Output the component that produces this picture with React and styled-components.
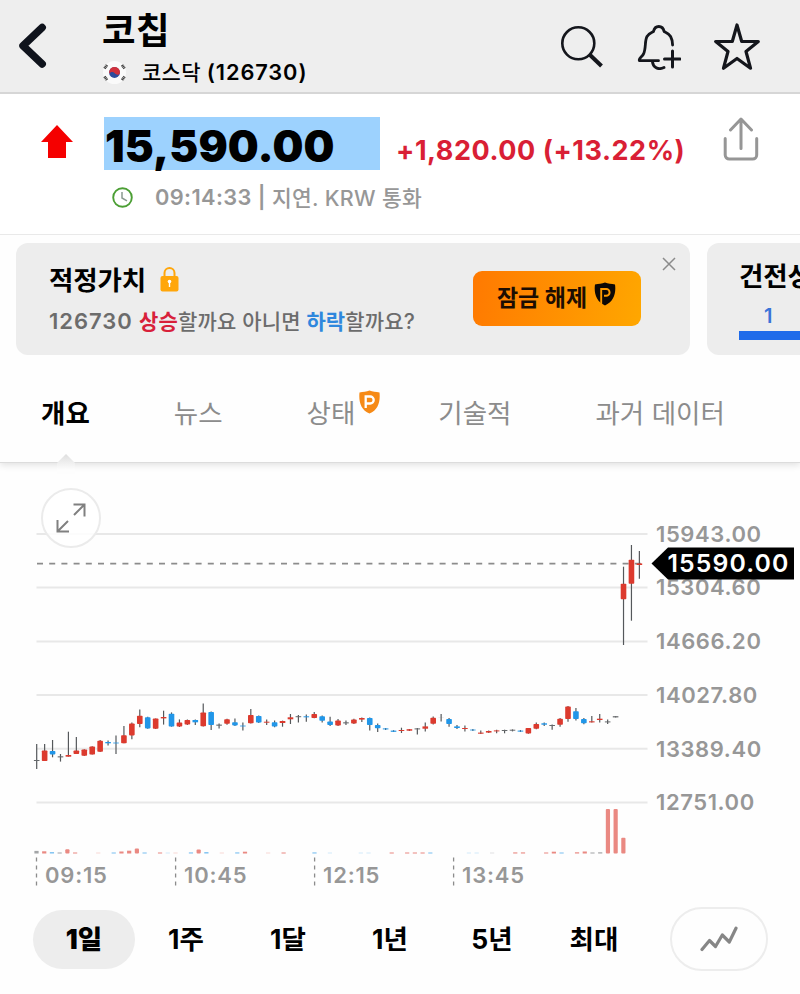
import React, { useState } from 'react';
import styled, { createGlobalStyle } from 'styled-components';

const GlobalStyle = createGlobalStyle`
  * {
    box-sizing: border-box;
  }

  body {
    margin: 0;
    background: #fefefe;
    font-family: Inter, 'Noto Sans CJK KR', sans-serif;
    color: #000;
  }

  button {
    font-family: inherit;
    border: none;
    background: none;
    padding: 0;
    margin: 0;
    color: inherit;
    cursor: pointer;
  }

  svg {
    display: block;
    flex-shrink: 0;
  }
`;

const Screen = styled.div`
  width: 800px;
  height: 994px;
  overflow: hidden;
  display: flex;
  flex-direction: column;
`;

const Header = styled.header`
  height: 94px;
  flex-shrink: 0;
  display: flex;
  background: #eee;
  border-bottom: 2px solid #d6d6d6;
`;

const BackButton = styled.button`
  width: 102px;
  height: 92px;
  padding-left: 18px;
  display: flex;
  align-items: center;
`;

const Titles = styled.div`
  flex: 1;
  padding-top: 8px;
`;

const Title = styled.h1`
  margin: 0;
  font-size: 36.5px;
  line-height: 46px;
  font-weight: 700;
  letter-spacing: 0.5px;
`;

const Exchange = styled.div`
  display: flex;
  align-items: center;
  height: 36px;
  padding-left: 1px;
  font-size: 21px;
  font-weight: 500;
  white-space: pre;
`;

const ExchangeName = styled.span`
  margin: -2px 0 0 16px;
  letter-spacing: 0.3px;
`;

const ExchangeCode = styled.span`
  font-size: 21.8px;
  letter-spacing: 0.9px;
  font-weight: 600;
`;

const HeaderActions = styled.div`
  display: flex;
  align-items: center;
  gap: 33px;
  padding: 1px 40px 0 0;
`;

const Quote = styled.section`
  height: 141px;
  flex-shrink: 0;
  display: flex;
  background: #fff;
  border-bottom: 1px solid #e9e9e9;
`;

const Direction = styled.div`
  width: 104px;
  padding: 31px 0 0 41px;
`;

const QuoteBody = styled.div`
  flex: 1;
  padding-top: 23px;
`;

const PriceRow = styled.div`
  display: flex;
  height: 53px;
`;

const Price = styled.div`
  width: 276px;
  padding-left: 1px;
  background: #9dd2fe;
  font-size: 43.5px;
  line-height: 58px;
  font-weight: 900;
  letter-spacing: 0.1px;
`;

const Change = styled.div`
  margin-left: 16px;
  font-size: 27px;
  line-height: 67px;
  font-weight: 700;
  letter-spacing: 0.55px;
  color: #d91f35;
  white-space: nowrap;
`;

const TimeRow = styled.div`
  display: flex;
  align-items: center;
  height: 54px;
  padding-left: 8px;
  font-size: 21.5px;
  font-weight: 500;
  color: #979797;
  white-space: pre;
`;

const TimeText = styled.span`
  margin-left: 22px;
  font-size: 21.8px;
  font-weight: 600;
  letter-spacing: 0.4px;
`;

const TimeNote = styled.span`
  margin-top: -2px;
  letter-spacing: 0.3px;
`;

const ShareButton = styled.button`
  width: 77px;
  height: 91px;
  display: flex;
  align-items: center;
`;

const Cards = styled.section`
  display: flex;
  flex-shrink: 0;
  gap: 17px;
  padding: 8px 0 0 16px;
  overflow: hidden;
`;

const Card = styled.div`
  width: ${props => props.$width};
  height: 112px;
  flex-shrink: 0;
  display: flex;
  background: #ededed;
  border-radius: 12px;
`;

const FairValue = styled.div`
  width: 457px;
  padding: 16px 0 0 33px;
`;

const CardTitle = styled.div`
  display: flex;
  align-items: center;
  gap: 14px;
  height: 40px;
  font-size: 26.5px;
  font-weight: 700;
  letter-spacing: -0.1px;
  white-space: nowrap;
`;

const CardTitleText = styled.span`
  margin-top: -2px;
`;

const Question = styled.div`
  height: 42px;
  line-height: 44px;
  font-size: 21px;
  font-weight: 500;
  letter-spacing: 0.15px;
  color: #6c6c6c;
  white-space: pre;
`;

const Ticker = styled.span`
  font-size: 22px;
  font-weight: 600;
  letter-spacing: 0.95px;
`;

const Accent = styled.span`
  color: ${props => props.$color};
  font-weight: 700;
`;

const UnlockButton = styled.button`
  width: 168px;
  height: 55px;
  margin-top: 28px;
  display: flex;
  justify-content: center;
  border-radius: 9px;
  background: linear-gradient(100deg, #ff7901, #ffa700);
  color: #1c0d02;
  font-size: 23px;
  line-height: 54px;
  font-weight: 700;
  white-space: nowrap;
  gap: 7px;

  svg {
    margin: 11px 1px 0 0;
  }
`;

const CloseButton = styled.button`
  width: 14px;
  height: 14px;
  margin: 14px 0 0 21px;
`;

const Health = styled.div`
  padding: 12px 0 0 32px;
`;

const HealthScore = styled.div`
  width: 120px;
  padding-left: 25px;
  height: 45px;
  line-height: 42px;
  border-bottom: 9px solid #1f6bea;
  font-size: 20px;
  font-weight: 600;
  color: #3a74d8;
`;

const Tabs = styled.nav`
  height: 108px;
  flex-shrink: 0;
  position: relative;
  display: flex;
  padding: 27px 0 0 41px;
  border-bottom: 1px solid #dcdcdc;
  box-shadow: 0 2px 7px rgba(0, 0, 0, 0.12);
  clip-path: inset(0 0 -14px 0);
`;

const Tab = styled.button`
  height: 58px;
  margin-right: ${props => props.$gap};
  display: flex;
  align-items: center;
  font-size: 26.5px;
  font-weight: ${props => (props.$active ? 700 : 400)};
  color: ${props => (props.$active ? '#000' : '#8c8c8c')};
  letter-spacing: 0;
  white-space: nowrap;

  svg {
    margin: -19px 0 0 4px;
  }
`;

const Notch = styled.svg`
  position: absolute;
  left: 55px;
  bottom: -12px;
`;

const ChartArea = styled.section`
  position: relative;
  height: 426px;
  flex-shrink: 0;
`;

const ExpandButton = styled.button`
  position: absolute;
  left: 41px;
  top: 25px;
  width: 60px;
  height: 60px;
  display: flex;
  align-items: center;
  justify-content: center;
  border: 2px solid #ebebeb;
  border-radius: 50%;
  background: rgba(255, 255, 255, 0.85);
`;

const AxisLabel = styled.text`
  font-size: ${props => props.$size || '22px'};
  font-weight: ${props => props.$weight || 600};
  fill: ${props => props.$fill || '#979797'};
  letter-spacing: ${props => props.$spacing || '0.6px'};
`;

const Periods = styled.div`
  display: flex;
  align-items: center;
  padding: 18px 0 0 33px;
`;

const Period = styled.button`
  width: 102px;
  height: 59px;
  border-radius: 30px;
  background: ${props => (props.$active ? '#ededed' : 'transparent')};
  font-size: 26.5px;
  line-height: 57px;
  font-weight: ${props => (props.$active ? 900 : 700)};
  letter-spacing: 0;
`;

const StyleButton = styled.button`
  width: 98px;
  height: 64px;
  margin-left: 25px;
  display: flex;
  align-items: center;
  justify-content: center;
  border: 2px solid #ededed;
  border-radius: 32px;
`;

const GRID = [
  { y: 534, label: '15943.00' },
  { y: 587.5, label: '15304.60' },
  { y: 641.5, label: '14666.20' },
  { y: 695, label: '14027.80' },
  { y: 748.8, label: '13389.40' },
  { y: 802.6, label: '12751.00' },
];

const TIMES = [
  { x: 36.5, label: '09:15' },
  { x: 175.6, label: '10:45' },
  { x: 314.6, label: '12:15' },
  { x: 453.6, label: '13:45' },
];

const COLORS = { r: '#dc3a2e', b: '#2196e8', n: '#66696c' };

// colour, high, low, body top, body bottom
const CANDLES = [
  ['n', 744, 769, 760, 761], ['r', 744, 761, 750.4, 761], ['b', 740, 757.3, 751, 754.4],
  ['n', 754, 761.6, 756.3, 757.4], ['r', 731.7, 756.6, 755, 756.7], ['r', 737, 754, 750.4, 754],
  ['r', 749.3, 756, 749.5, 755.8], ['r', 746.3, 754.6, 746.5, 754.5], ['r', 740, 752, 740.8, 751.8],
  ['b', 740.4, 745.6, 742, 743.3], ['b', 735.4, 754, 742.6, 743.4], ['r', 726, 743.3, 735.3, 743.2],
  ['r', 722.6, 739.3, 723.4, 735.4], ['r', 709.4, 727.3, 715.7, 724], ['b', 716.8, 728.7, 717.3, 728.4],
  ['r', 718.4, 729, 718.5, 728.8], ['r', 710.7, 724.6, 717, 718.4], ['b', 712.4, 726.7, 713.7, 726.6],
  ['r', 719.4, 727, 722.6, 726.6], ['r', 719.4, 725, 720, 724.6], ['b', 719.4, 725, 720, 722.3],
  ['r', 703.4, 726.4, 712.4, 726.3], ['b', 711.4, 730, 712, 725], ['n', 723.6, 728.4, 724.6, 725.7],
  ['r', 718.7, 724.7, 719.2, 723.8], ['b', 718.6, 726, 722.3, 725.4], ['b', 722.4, 730.4, 725.6, 726.4],
  ['r', 709, 723.4, 715, 723.2], ['b', 715.4, 723, 716, 722.6], ['r', 719.4, 725, 721.7, 722.7],
  ['b', 720.6, 727.3, 722.3, 726.6], ['r', 720.6, 726.7, 721, 723], ['r', 714, 724, 717.3, 719.3],
  ['n', 715, 722.4, 716.2, 717.2], ['b', 714.4, 721.7, 716.3, 717.3], ['r', 712, 718.3, 714, 718],
  ['b', 715.4, 722.6, 716.3, 720.7], ['b', 716.7, 726, 721.4, 725], ['r', 719, 726, 720.4, 725.6],
  ['n', 720.4, 725, 722.3, 723.4], ['r', 718.7, 724, 719.4, 723.6], ['r', 717.4, 722, 718, 719.6],
  ['b', 717.4, 730.4, 718, 725], ['b', 723.6, 732, 725, 728.3], ['b', 728, 730, 728.4, 729.4],
  ['b', 730.2, 732, 730.6, 731.8], ['r', 727.7, 733, 730, 731], ['r', 729, 731, 729.2, 730.7],
  ['n', 728, 734.6, 728.4, 729.4], ['r', 722.6, 731.4, 726.4, 728.7], ['r', 716.6, 724.6, 717.7, 723.7],
  ['n', 714, 721.6, 717, 717.1], ['b', 718, 726.7, 719, 724], ['b', 725, 729, 726.4, 728],
  ['r', 725.6, 731.4, 728, 729], ['b', 729, 731, 729.6, 730.4], ['r', 730.6, 734, 732.6, 733.7],
  ['r', 730.6, 733, 731, 732.6], ['r', 729.7, 733.3, 730.4, 731.4], ['n', 729.7, 733.3, 730, 731],
  ['n', 729.4, 731.4, 729.7, 730.7], ['b', 730, 732, 730.6, 731.6], ['r', 728, 733.8, 728, 733.6],
  ['r', 722.6, 729.3, 724, 728.7], ['b', 722.4, 726, 723.3, 724.7], ['n', 724.6, 729.7, 725, 726],
  ['r', 718, 726.7, 718.7, 724.7], ['r', 706, 721.7, 706.6, 719], ['b', 708, 720.6, 711.3, 719],
  ['b', 718, 724.3, 719, 723.3], ['r', 716, 722.6, 721.3, 722.4], ['r', 714, 722.4, 718.7, 720],
  ['n', 719.4, 724, 721.4, 722.4], ['n', 716.2, 717.4, 716.2, 717.4], ['r', 566.7, 645, 583.7, 599.3],
  ['r', 545, 620.7, 559.7, 583.7], ['r', 551, 578.7, 563.4, 565],
];

// slot, colour, height
const VOLUMES = [
  [0, 'n', 2.6], [1, 'r', 2.2], [2, 'b', 1.4], [3, 'n', 1], [4, 'r', 4.2], [5, 'r', 1], [8, 'r', 0.8],
  [10, 'b', 1], [11, 'r', 2], [12, 'r', 2.8], [13, 'r', 5], [14, 'b', 1], [16, 'r', 1], [17, 'b', 0.6],
  [18, 'r', 0.5], [20, 'b', 1.1], [21, 'r', 4], [22, 'b', 1.4], [24, 'r', 0.4], [26, 'b', 1.1],
  [27, 'r', 1.8], [30, 'r', 0.5], [32, 'r', 1], [36, 'b', 1.1], [38, 'b', 0.4], [42, 'b', 0.6],
  [43, 'b', 0.6], [46, 'r', 1], [48, 'r', 1], [49, 'r', 1], [50, 'r', 1], [51, 'b', 0.9],
  [56, 'b', 0.5], [57, 'b', 0.4], [59, 'n', 0.5], [62, 'r', 1.1], [63, 'r', 1.1], [66, 'r', 1],
  [67, 'r', 1.8], [68, 'b', 1], [70, 'r', 1.2], [71, 'r', 2], [72, 'n', 1], [73, 'n', 1.2],
  [74, 'r', 44.5], [75, 'r', 44.5], [76, 'r', 15.8],
];

const BackIcon = () => (
  <svg width="30" height="48" viewBox="0 0 30 48" fill="none" stroke="#0f131c" strokeWidth="7.5" strokeLinecap="round" strokeLinejoin="round">
    <path d="M24.2 5.5 5 23.8 24.2 42" />
  </svg>
);

const FlagIcon = () => (
  <svg width="23" height="23" viewBox="0 0 23 23">
    <circle cx="11.5" cy="11.5" r="11.5" fill="#fafafa" />
    <circle cx="11.5" cy="11.5" r="5.4" fill="#2c4b9c" />
    <path d="M6.7 9a5.4 5.4 0 0 1 10.1 3.7c-1 1.5-3.2 1.3-5-.5-1.9-1.8-4.4-1.3-5.5.6A5.4 5.4 0 0 1 6.7 9z" fill="#d0303c" />
    <g stroke="#444" strokeWidth="2.8" strokeDasharray="1.2 0.4">
      <path d="M1.5 7.5 4 4M19 4l2.5 3.5M1.5 15.5 4 19M19 19l2.5-3.5" />
    </g>
  </svg>
);

const SearchIcon = () => (
  <svg width="44" height="44" viewBox="0 0 44 44" fill="none" stroke="#14161c">
    <circle cx="18.3" cy="18.3" r="16" strokeWidth="2.6" />
    <path d="M29.5 29.5 41.5 41" strokeWidth="4" />
  </svg>
);

const BellIcon = () => (
  <svg width="44" height="46" viewBox="0 0 44 46" fill="none" stroke="#14161c" strokeWidth="2.8" strokeLinecap="round" strokeLinejoin="round">
    <path d="M21.5 36.7H2.5C1 34.5 5 33 6.5 30c2.8-6 1-13 3.5-17.5C12 9 15 8.5 16.5 7.5 17.3 3.5 19 2.5 21.8 2.5s4.5 1 5.300 5c1.500 1 4.500 1.500 6.500 5 1.500 2.800 2 5.500 2 8.500" />
    <path d="M15.5 38c.5 5 5.5 8.5 11.5 5.5" />
    <path d="M35.5 27v16M27.5 35H43" strokeWidth="3" />
  </svg>
);

const StarIcon = () => (
  <svg width="46" height="47" viewBox="0 0 46 47" fill="none" stroke="#14161c" strokeWidth="3.2" strokeLinejoin="round">
    <path d="m23 2 4.7 16.500H44.300L32 28.500 36.500 45.200 23 35.500 9.500 45.200 14 28.500 1.700 18.500H18.300z" />
  </svg>
);

const ShareIcon = () => (
  <svg width="36" height="45" viewBox="0 0 36 45" fill="none" stroke="#969696" strokeWidth="3" strokeLinecap="round" strokeLinejoin="round">
    <path d="M2.2 21.5V38a4 4 0 0 0 4 4h23.5a4 4 0 0 0 4-4V21.5M18 31.5V2.5M7.5 13 18 2l10.5 11" />
  </svg>
);

const ClockIcon = () => (
  <svg width="21" height="21" viewBox="0 0 21 21" fill="none">
    <circle cx="10.5" cy="10.5" r="9.3" stroke="#4c9f35" strokeWidth="1.9" />
    <path d="M10 5v6l5 2.8" stroke="#8b9a91" strokeWidth="1.5" />
  </svg>
);

const LockIcon = () => (
  <svg width="19" height="25" viewBox="0 0 19 25">
    <path d="M4.5 10V6a5 5 0 0 1 10 0v4" fill="none" stroke="#ffa60a" strokeWidth="2" />
    <rect x="0.5" y="9" width="18" height="15.5" rx="2" fill="#ffa60a" />
    <circle cx="9.5" cy="14.5" r="1.8" fill="#fff" />
    <path d="M9.5 14v6" stroke="#fff" strokeWidth="1.4" />
  </svg>
);

const ShieldIcon = ({ fill, mark }) => (
  <svg width="21" height="24" viewBox="0 0 21 24">
    <path d="M10.5.5C13.5 1.5 17 2 20.5 2.5c1 9-1.5 17.5-10 21-8.5-3.5-11-12-10-21C4 2 7.5 1.5 10.5.5z" fill={fill} />
    <path d="M6.7 18V6.5h4.5a3.5 3.5 0 0 1 0 7H7.5" fill="none" stroke={mark} strokeWidth="2.3" />
  </svg>
);

// dark badge: the P stem runs into the lower edge of the shield
const DarkShieldIcon = () => (
  <svg width="22" height="24" viewBox="0 0 22 24">
    <path d="M11 .5C14 1.5 17.5 2 21 2.5c1.300 9-1.500 17.500-10 21-8.500-3.500-11.300-12-10-21C4.500 2 8 1.500 11 .5z" fill="#0d0906" />
    <path d="M7.2 22V7h5a3.4 3.4 0 0 1 0 6.800H10" fill="none" stroke="#ff9a00" strokeWidth="1.9" />
  </svg>
);

const CloseIcon = () => (
  <svg width="14" height="14" viewBox="0 0 14 14" stroke="#8b8b8b" strokeWidth="1.5">
    <path d="M1 1l12 12M13 1 1 13" />
  </svg>
);

const ExpandIcon = () => (
  <svg width="30" height="30" viewBox="0 0 30 30" fill="none" stroke="#808080" strokeWidth="2">
    <path d="M18 12 28.5 1.5M17.5 1.5h11v12M12 18 1.5 28.5M1.5 17v11.5H13" />
  </svg>
);

const LineIcon = () => (
  <svg width="38" height="26" viewBox="0 0 38 26" fill="none" stroke="#868686" strokeWidth="3.2" strokeLinecap="round" strokeLinejoin="round">
    <path d="M2 23.5 9.5 14.5l6 6L22.3 9l7 7L36 2.2" />
  </svg>
);

const Chart = () => (
  <svg width="800" height="426" viewBox="0 463 800 426">
    {GRID.map(line => (
      <path key={line.label} d={`M36.5 ${line.y}H647.5`} stroke="#e8e8e8" strokeWidth="2" />
    ))}
    <path d="M37 563.7H642" stroke="#8c8c8c" strokeWidth="1.8" strokeDasharray="6 6.2" />
    {VOLUMES.map(([slot, color, height]) => (
      <rect
        key={slot}
        x={34.4 + slot * 7.722}
        y={853.5 - Math.max(height, 1)}
        width="4.2"
        height={Math.max(height, 1)}
        rx={height > 3 ? 1 : 0}
        fill={COLORS[color]}
        opacity={height < 0.9 ? 0.2 : 0.6}
      />
    ))}
    {CANDLES.map(([color, high, low, top, bottom], i) => {
      const x = 36.7 + i * 7.93;
      return (
        <g key={i}>
          <path d={`M${x} ${high}V${low}`} stroke="#55585b" strokeWidth="1.2" />
          <rect x={x - 2.8} y={top} width="5.6" height={bottom - top} rx={bottom - top > 3 ? 0.8 : 0} fill={COLORS[color]} />
        </g>
      );
    })}
    {GRID.map(line => (
      <AxisLabel key={line.label} x="656" y={line.y + 7.7}>{line.label}</AxisLabel>
    ))}
    <path d="M651.5 563.5 668 547.5H794V579.5H668z" fill="#000" />
    <AxisLabel x="667.5" y="572.3" $size="24.8px" $fill="#fff" $spacing="1.1px">15590.00</AxisLabel>
    {TIMES.map(time => (
      <g key={time.label}>
        <path d={`M${time.x} 857.5V887`} stroke="#8c8c8c" strokeWidth="1.3" strokeDasharray="4 4" />
        <AxisLabel x={time.x + 8.5} y="882.5" $spacing="0.8px">{time.label}</AxisLabel>
      </g>
    ))}
  </svg>
);

const TABS = [
  { id: 'overview', label: '개요', gap: '84px' },
  { id: 'news', label: '뉴스', gap: '84px' },
  { id: 'health', label: '상태', gap: '58px', pro: true },
  { id: 'technical', label: '기술적', gap: '84px' },
  { id: 'history', label: '과거 데이터', gap: '0' },
];

const PERIODS = ['1일', '1주', '1달', '1년', '5년', '최대'];

const App = () => {
  const [activeTab, setActiveTab] = useState('overview');
  const [period, setPeriod] = useState('1일');

  return (
    <Screen>
      <GlobalStyle />
      <Header>
        <BackButton>
          <BackIcon />
        </BackButton>
        <Titles>
          <Title>코칩</Title>
          <Exchange>
            <FlagIcon />
            <ExchangeName>코스닥 </ExchangeName>
            <ExchangeCode>(126730)</ExchangeCode>
          </Exchange>
        </Titles>
        <HeaderActions>
          <SearchIcon />
          <BellIcon />
          <StarIcon />
        </HeaderActions>
      </Header>

      <Quote>
        <Direction>
          <svg width="32" height="33" viewBox="0 0 32 33">
            <path d="M16 0 32 17H25V33H7V17H0z" fill="#f50000" />
          </svg>
        </Direction>
        <QuoteBody>
          <PriceRow>
            <Price>15,590.00</Price>
            <Change>+1,820.00 (+13.22%)</Change>
          </PriceRow>
          <TimeRow>
            <ClockIcon />
            <TimeText>09:14:33 | </TimeText>
            <TimeNote>지연. KRW 통화</TimeNote>
          </TimeRow>
        </QuoteBody>
        <ShareButton>
          <ShareIcon />
        </ShareButton>
      </Quote>

      <Cards>
        <Card $width="674px">
          <FairValue>
            <CardTitle>
              <CardTitleText>적정가치</CardTitleText>
              <LockIcon />
            </CardTitle>
            <Question>
              <Ticker>126730 </Ticker>
              <Accent $color="#d8203a">상승</Accent>할까요 아니면 <Accent $color="#2f87dd">하락</Accent>할까요?
            </Question>
          </FairValue>
          <UnlockButton>
            잠금 해제
            <DarkShieldIcon />
          </UnlockButton>
          <CloseButton>
            <CloseIcon />
          </CloseButton>
        </Card>
        <Card $width="300px">
          <Health>
            <CardTitle>
              <CardTitleText>건전성</CardTitleText>
            </CardTitle>
            <HealthScore>1</HealthScore>
          </Health>
        </Card>
      </Cards>

      <Tabs>
        {TABS.map(tab => (
          <Tab key={tab.id} $gap={tab.gap} $active={tab.id === activeTab} onClick={() => setActiveTab(tab.id)}>
            {tab.label}
            {tab.pro && <ShieldIcon fill="#f68a16" mark="#fff" />}
          </Tab>
        ))}
        <Notch width="22" height="20" viewBox="0 0 22 20">
          <defs>
            <linearGradient id="notch" x1="0" y1="0" x2="0" y2="1">
              <stop offset="0" stopColor="#dedede" />
              <stop offset="0.8" stopColor="#fdfdfd" />
            </linearGradient>
          </defs>
          <path d="M2 9 11 0l9 9v11H2z" fill="url(#notch)" />
        </Notch>
      </Tabs>

      <ChartArea>
        <Chart />
        <ExpandButton>
          <ExpandIcon />
        </ExpandButton>
      </ChartArea>

      <Periods>
        {PERIODS.map(item => (
          <Period key={item} $active={item === period} onClick={() => setPeriod(item)}>
            {item}
          </Period>
        ))}
        <StyleButton>
          <LineIcon />
        </StyleButton>
      </Periods>
    </Screen>
  );
};

export default App;
